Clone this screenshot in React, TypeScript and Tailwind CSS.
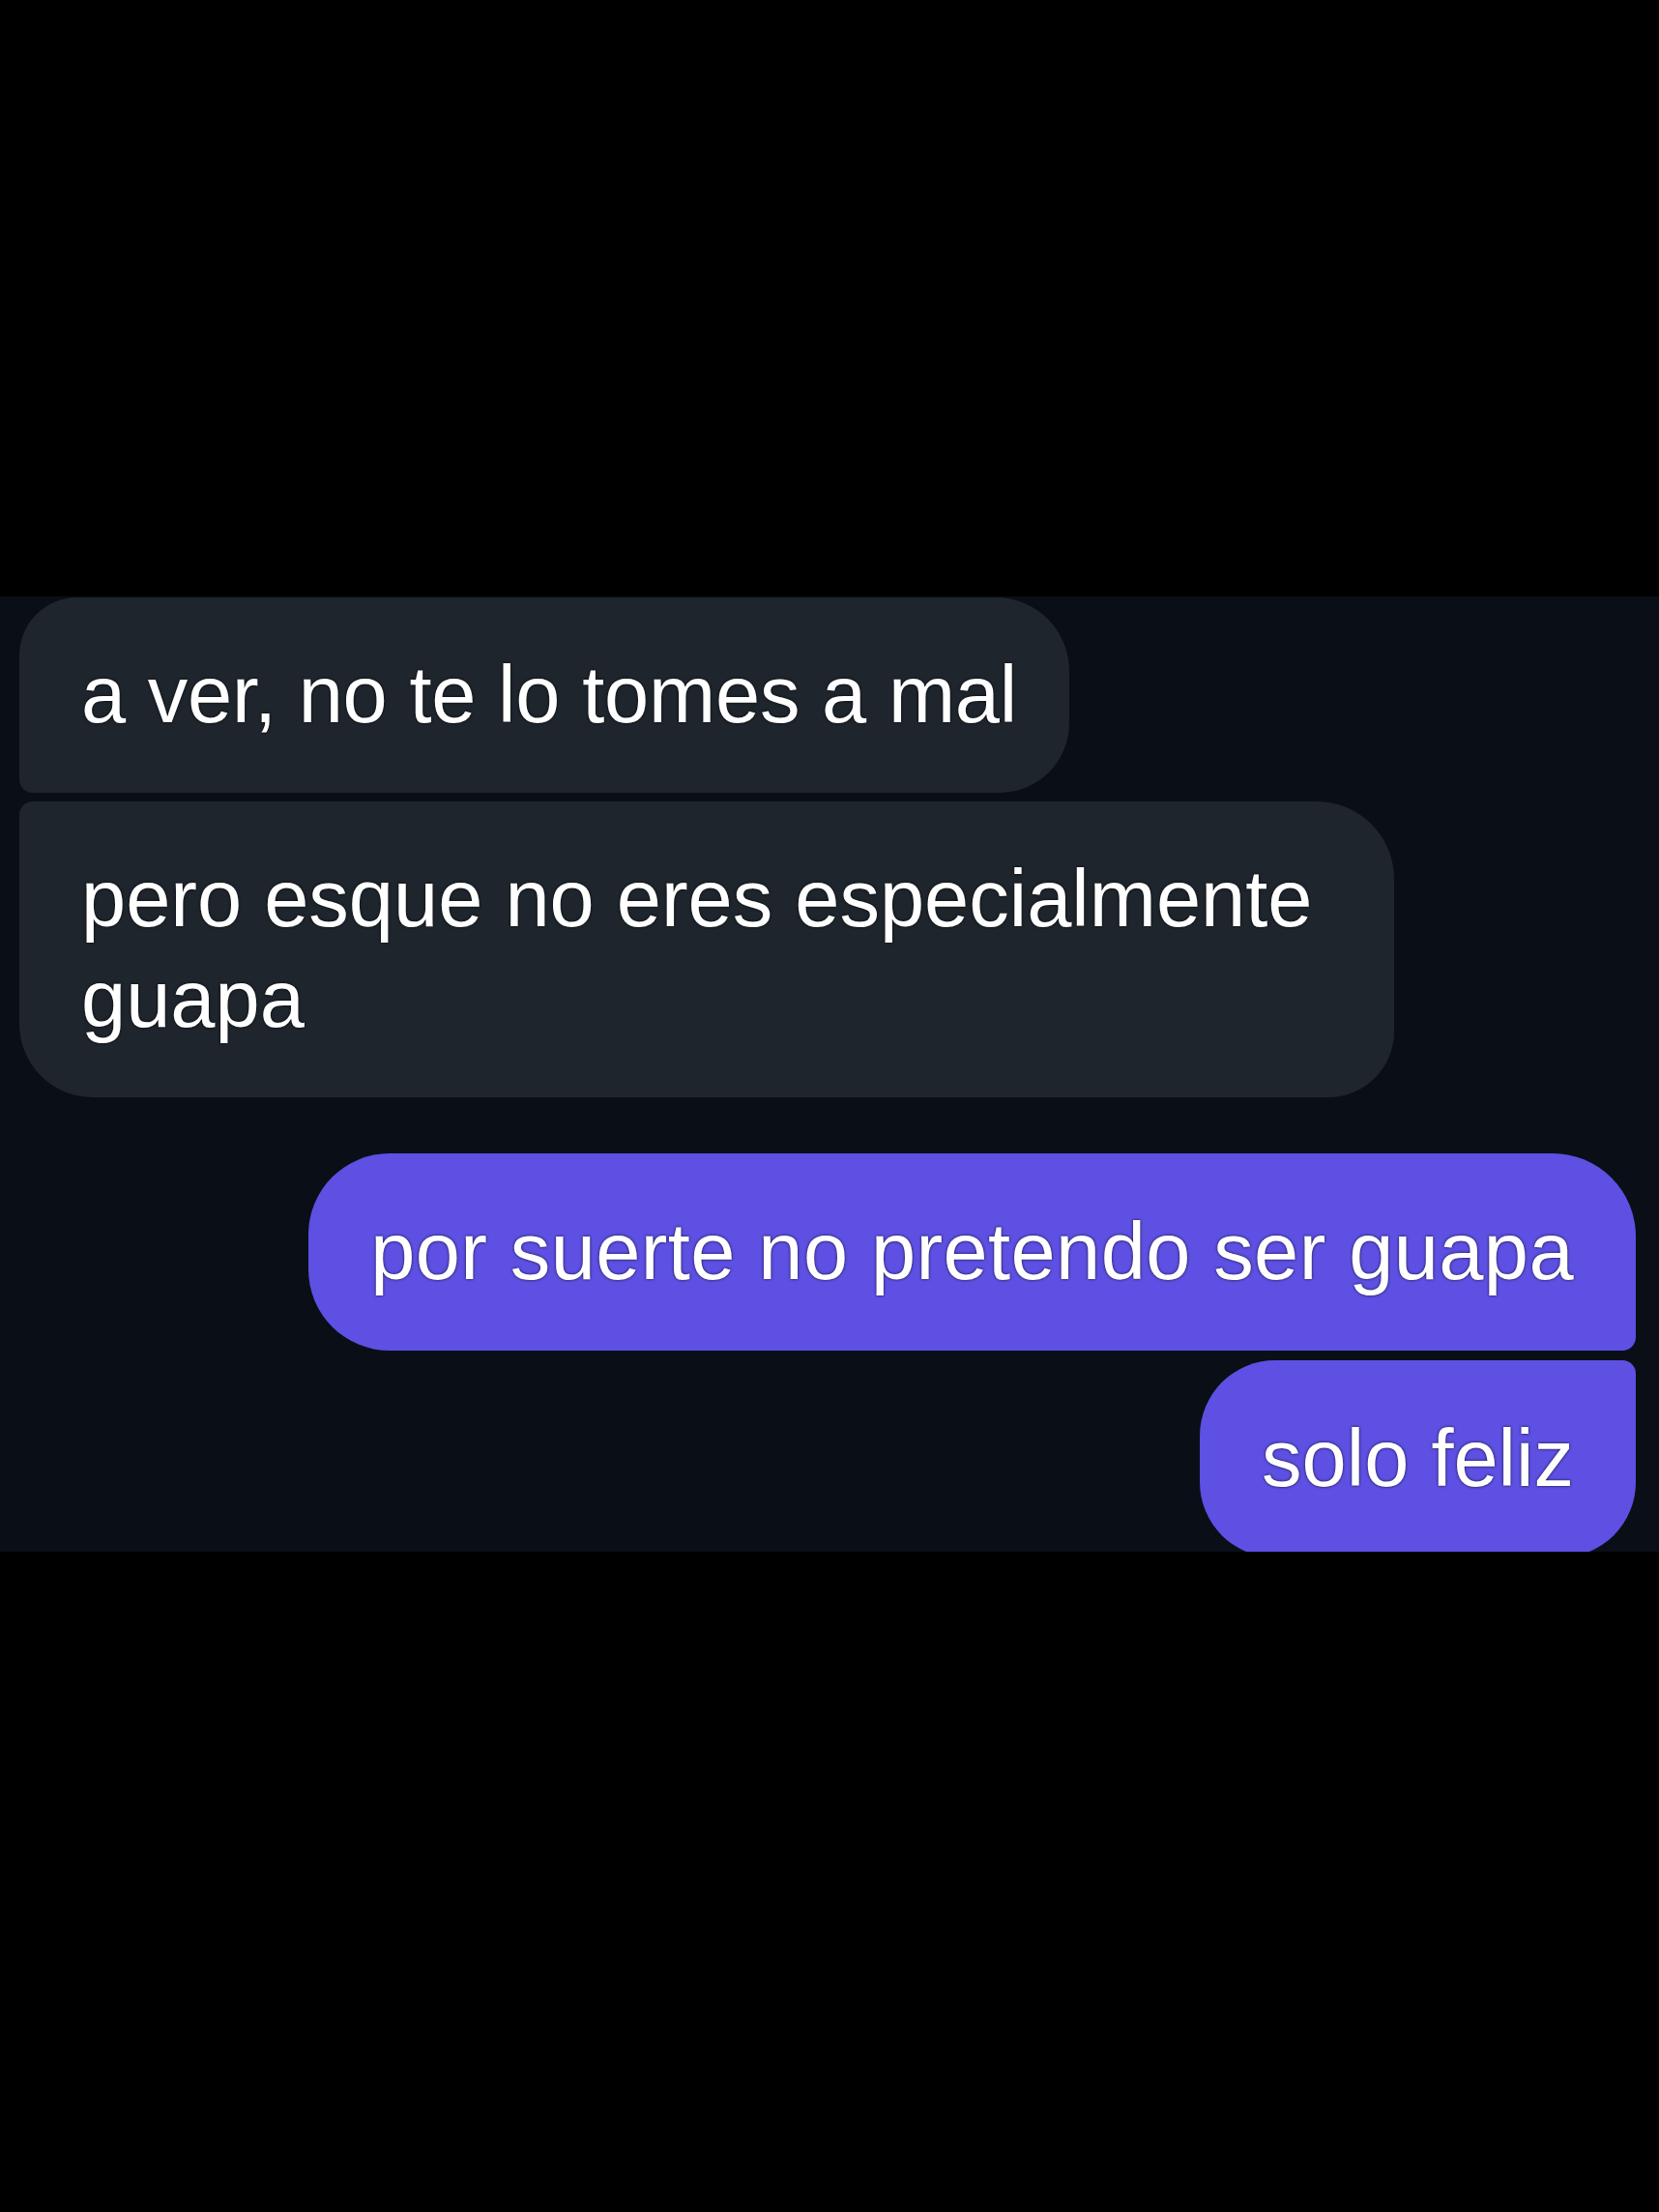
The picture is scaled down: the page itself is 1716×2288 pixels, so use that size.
const textStyle =
  "text-[83px] leading-[104px] text-white [text-shadow:0_0_3px_rgba(0,0,0,0.85)]"

const Received = ({ children, className }: { children: React.ReactNode; className: string }) => (
  <div className={`bg-[#1f252d] px-[64px] py-[49px] ${textStyle} ${className}`}>{children}</div>
)

const Sent = ({ children, className }: { children: React.ReactNode; className: string }) => (
  <div className={`bg-[#5d50e3] px-[64px] py-[50px] ${textStyle} ${className}`}>{children}</div>
)

export default function App() {
  return (
    <div className="flex h-[2288px] w-[1716px] flex-col bg-black font-['Liberation_Sans',Arial,sans-serif]">
      <div className="h-[617px] shrink-0" />

      <div className="flex h-[988px] shrink-0 flex-col overflow-hidden bg-[#0a0f17] pl-[20px] pr-[24px] pt-[1px]">
        <div className="flex shrink-0 flex-col items-start gap-[9px]">
          <Received className="rounded-tl-[60px] rounded-tr-[76px] rounded-br-[72px] rounded-bl-[14px] pr-[54px] tracking-[-0.2px]">
            a ver, no te lo tomes a mal
          </Received>
          <Received className="max-w-[1422px] rounded-tl-[14px] rounded-tr-[80px] rounded-br-[68px] rounded-bl-[76px]">
            pero esque no eres especialmente guapa
          </Received>
        </div>

        <div className="mt-[58px] flex shrink-0 flex-col items-end gap-[10px]">
          <Sent className="rounded-tl-[84px] rounded-tr-[86px] rounded-br-[14px] rounded-bl-[84px] tracking-[0.4px]">
            por suerte no pretendo ser guapa
          </Sent>
          <Sent className="shrink-0 rounded-tl-[78px] rounded-tr-[14px] rounded-br-[78px] rounded-bl-[78px]">
            solo feliz
          </Sent>
        </div>
      </div>

      <div className="flex-1" />
    </div>
  )
}
